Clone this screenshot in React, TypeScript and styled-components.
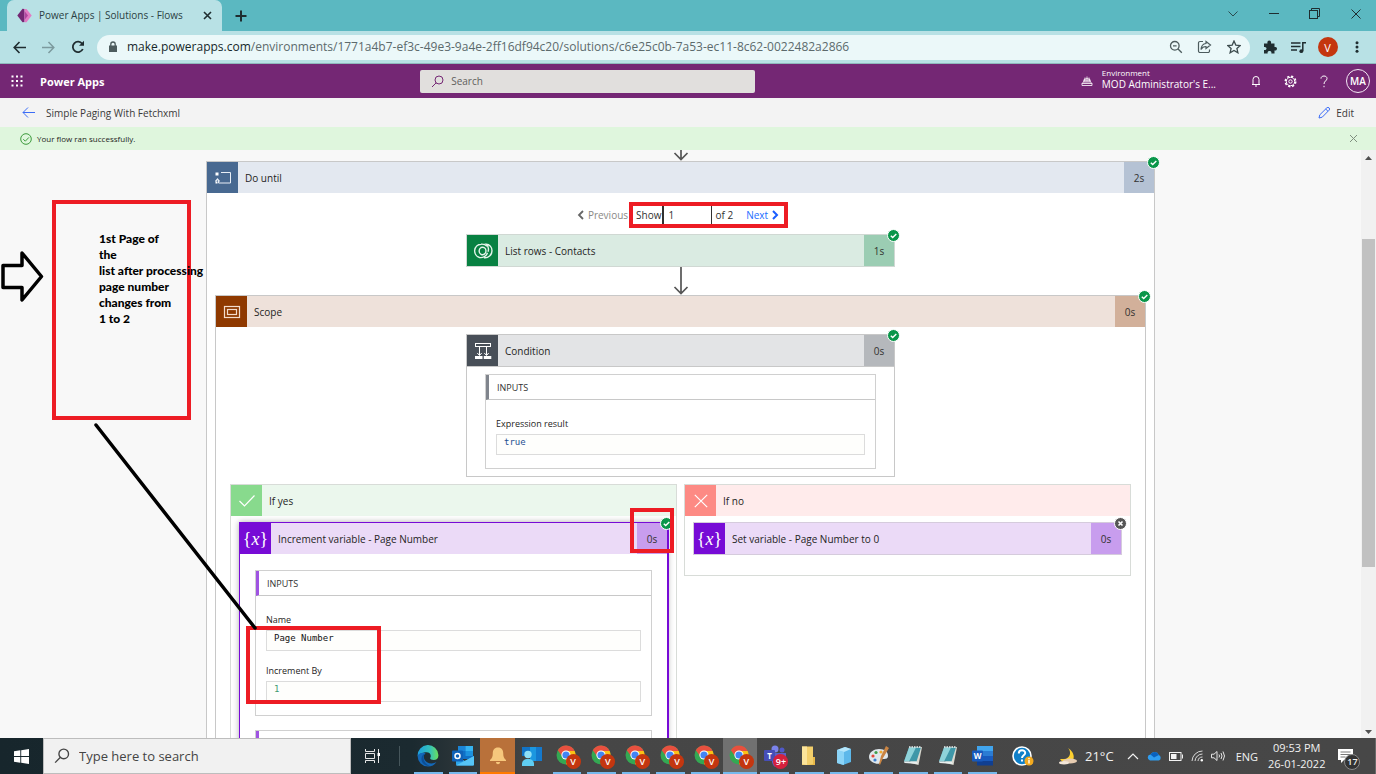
import React from 'react';
import styled, { createGlobalStyle, css } from 'styled-components';

const UI = '"Open Sans", "Noto Sans", "Liberation Sans", sans-serif';
const MONO = '"DejaVu Sans Mono", "Liberation Mono", monospace';

const GlobalStyle = createGlobalStyle`
  *, *::before, *::after { box-sizing: border-box; }
  body { margin: 0; font-family: ${UI}; color: #323130; }
  button, input { font: inherit; color: inherit; margin: 0; }
  svg { display: block; flex: none; }
`;

const Screen = styled.div`
  display: flex;
  flex-direction: column;
  height: 100vh;
  overflow: hidden;
`;

const PlainButton = styled.button`
  display: flex;
  align-items: center;
  justify-content: center;
  flex: none;
  padding: 0;
  border: 0;
  background: none;
`;

/* ---------- Browser window ---------- */

const TabStrip = styled.div`
  display: flex;
  align-items: stretch;
  height: 31px;
  padding-left: 7px;
  background: #5bb8c1;
`;

const Tab = styled.div`
  display: flex;
  align-items: center;
  width: 215px;
  padding: 0 10px 1px 10px;
  gap: 7px;
  border-radius: 7px 7px 0 0;
  background: #b8e1e5;
  color: #2b3f43;
  font-size: 10px;
  white-space: nowrap;
`;

const TabTitle = styled.span`
  flex: 1;
`;

const NewTab = styled(PlainButton)`
  width: 38px;
`;

const WindowControls = styled.div`
  display: flex;
  margin-left: auto;
  padding-bottom: 4px;
`;

const WindowButton = styled(PlainButton)`
  width: 41px;
`;

const Toolbar = styled.div`
  display: flex;
  align-items: center;
  height: 33px;
  padding: 0 5px;
  border-bottom: 1px solid #8fb9bd;
  background: #b8e1e5;
`;

const NavButton = styled(PlainButton)`
  width: 29px;
  height: 28px;
`;

const AddressBar = styled.div`
  display: flex;
  align-items: center;
  flex: 1;
  height: 25px;
  margin-left: 5px;
  padding: 0 9px 0 11px;
  gap: 9px;
  border-radius: 13px;
  background: #ebf8f9;
`;

const AddressText = styled.div`
  flex: 1;
  font-size: 12px;
  line-height: 20px;
  color: #5c6a6c;
  white-space: nowrap;
`;

const AddressHost = styled.span`
  color: #16282b;
`;

const AddressActions = styled.div`
  display: flex;
  gap: 14px;
  color: #4d5c5e;
`;

const ToolbarActions = styled.div`
  display: grid;
  grid-auto-flow: column;
  grid-auto-columns: 29px;
  align-items: center;
  justify-items: center;
  margin-left: 5px;
`;

const ProfileDot = styled(PlainButton)`
  width: 20px;
  height: 20px;
  border-radius: 50%;
  background: #c4360f;
  color: #fff;
  font-size: 11px;
`;

/* ---------- Power Apps chrome ---------- */

const AppHeader = styled.header`
  display: grid;
  grid-template-columns: 2fr 336px 3fr;
  align-items: center;
  flex: none;
  height: 34px;
  padding: 0 6px 0 11px;
  background: #742774;
  color: #fff;
`;

const Brand = styled.div`
  display: flex;
  align-items: center;
  gap: 17px;
  padding-right: 10px;
  font-size: 11px;
  font-weight: 700;
`;

const HeaderSearch = styled.label`
  display: flex;
  align-items: center;
  height: 23px;
  margin-right: 1px;
  padding-left: 11px;
  gap: 7px;
  border-radius: 2px;
  background: #e1dfdd;
  color: #605e5c;
  font-size: 10px;
`;

const BareInput = styled.input`
  flex: 1;
  min-width: 0;
  padding: 0;
  border: 0;
  outline: 0;
  background: transparent;
  &::placeholder { color: inherit; opacity: 1; }
`;

const HeaderTools = styled.div`
  display: flex;
  align-items: center;
  justify-content: flex-end;
`;

const Environment = styled(PlainButton)`
  gap: 9px;
  margin-right: 23px;
  text-align: left;
  font-size: 10px;
  line-height: 12px;
`;

const EnvironmentName = styled.span`
  padding-bottom: 5px;
`;

const EnvironmentCaption = styled.span`
  display: block;
  font-size: 8px;
  line-height: 11px;
`;

const HeaderButton = styled(PlainButton)`
  width: 34px;
  height: 34px;
  font-size: 15px;
`;

const Avatar = styled(PlainButton)`
  width: 24px;
  height: 24px;
  margin-left: 5px;
  border: 1px solid #f4e9f4;
  border-radius: 50%;
  font-size: 10px;
  font-weight: 600;
`;

const TitleBar = styled.div`
  display: flex;
  align-items: center;
  flex: none;
  height: 29px;
  padding: 0 22px;
  gap: 11px;
  background: #f3f3f3;
  color: #3b3a39;
`;

const FlowTitle = styled.h1`
  flex: 1;
  margin: 0;
  font-size: 10px;
  font-weight: 400;
`;

const EditButton = styled(PlainButton)`
  gap: 6px;
  font-size: 10px;
`;

const SuccessBar = styled.div`
  display: flex;
  align-items: center;
  flex: none;
  height: 23px;
  padding: 0 18px 0 20px;
  gap: 5px;
  background: #dff6dd;
  font-size: 8px;
  color: #252423;
`;

const SuccessText = styled.span`
  flex: 1;
`;

/* ---------- Designer canvas ---------- */

const Designer = styled.div`
  display: flex;
  flex: 1;
  min-height: 0;
`;

const Canvas = styled.main`
  display: flex;
  flex-direction: column;
  align-items: center;
  flex: 1;
  min-width: 0;
  overflow: hidden;
  background: #f8f8f8;
`;

const ScrollBar = styled.div`
  display: flex;
  flex-direction: column;
  align-items: center;
  justify-content: space-between;
  width: 15px;
  padding: 6px 1px 4px;
  background: #f1f1f1;
`;

const ScrollTrack = styled.div`
  display: flex;
  flex-direction: column;
  flex: 1;
  align-self: stretch;
  margin: 4px 0 5px;
`;

const ScrollGap = styled.div<{ $share: number }>`
  flex: ${p => p.$share};
`;

const ScrollThumb = styled.div<{ $share: number }>`
  flex: ${p => p.$share};
  background: #c1c1c1;
`;

const Container = styled.section<{ $line?: string }>`
  position: relative;
  display: flex;
  flex-direction: column;
  flex: none;
  border: 1px solid ${p => p.$line || '#c8c8c8'};
  background: #fff;
`;

const LoopBody = styled.div`
  display: flex;
  flex-direction: column;
  align-items: center;
  padding: 10px 8px 60px;
`;

const ScopeBody = styled.div`
  display: flex;
  flex-direction: column;
  align-items: center;
  padding: 7px 14px 60px;
`;

const BranchBody = styled.div`
  padding: 6px 8px 20px;
`;

const Branches = styled.div`
  display: flex;
  align-items: flex-start;
  gap: 7px;
  margin-top: 7px;
`;

const Card = styled(Container)<{ $selected?: boolean }>`
  width: 429px;
  ${p => p.$selected && css`
    border-color: #770bd6;
    box-shadow: 1px 0 0 #770bd6, 0 0 6px rgba(0, 0, 0, 0.32);
  `}
`;

const HeadBar = styled.header<{ $tint: string }>`
  display: flex;
  align-items: stretch;
  height: 31px;
  background: ${p => p.$tint};
  font-size: 10px;
`;

const HeadIcon = styled.span<{ $fill: string }>`
  display: flex;
  align-items: center;
  justify-content: center;
  width: 31px;
  background: ${p => p.$fill};
  color: #fff;
`;

const HeadTitle = styled.h2`
  display: flex;
  align-items: center;
  flex: 1;
  margin: 0;
  padding-left: 7px;
  font-size: 10px;
  font-weight: 400;
  color: #252423;
`;

const Duration = styled.span<{ $fill: string }>`
  display: flex;
  align-items: center;
  justify-content: center;
  width: 30px;
  background: ${p => p.$fill};
`;

const StatusBadge = styled.span`
  position: absolute;
  top: -6px;
  right: -6px;
`;

const Braces = styled.span`
  font-family: "Liberation Serif", "DejaVu Serif", serif;
  font-size: 18px;
  line-height: 20px;
`;

const Pager = styled.nav`
  position: relative;
  display: flex;
  align-items: center;
  height: 24px;
  margin-bottom: 7px;
  padding-right: 5px;
  font-size: 10px;
`;

const PagerButton = styled(PlainButton)<{ $tone: string }>`
  gap: 4px;
  color: ${p => p.$tone};
`;

const PagerLabel = styled.label`
  display: flex;
  align-items: center;
  gap: 1px;
  margin-left: 8px;
`;

const PagerInput = styled.input`
  width: 50px;
  height: 20px;
  padding: 0 4px;
  border: 1px solid #323130;
  border-left-width: 2px;
  background: #fff;
`;

const PagerCount = styled.span`
  margin: 0 13px 0 3px;
`;

const Panel = styled.div`
  border: 1px solid #d0d0d0;
  background: #fff;
`;

const PanelArea = styled.div`
  display: flex;
  flex-direction: column;
  padding: 7px 18px;
  border-top: 1px solid #c8c8c8;
`;

const SelectedArea = styled(PanelArea)`
  gap: 14px;
  padding: 16px 15px 14px;
  border-top: 0;
`;

const PanelHead = styled.h3<{ $bar: string }>`
  display: flex;
  align-items: center;
  height: 25px;
  margin: 0;
  padding-left: 8px;
  border-left: 3px solid ${p => p.$bar};
  border-bottom: 1px solid #c8c8c8;
  font-size: 9px;
  font-weight: 400;
`;

const PanelFields = styled.div`
  display: flex;
  flex-direction: column;
  gap: 9px;
  padding: 13px 10px;
`;

const Field = styled.label`
  display: flex;
  flex-direction: column;
  font-size: 9px;
  line-height: 21px;
  color: #252423;
`;

const FieldValue = styled.input<{ $ink: string }>`
  height: 21px;
  padding: 0 7px 5px;
  border: 1px solid #dcdcdc;
  background: #fefefc;
  font-family: ${MONO};
  font-size: 9px;
  color: ${p => p.$ink};
`;

/* ---------- Reviewer mark-up ---------- */

const RED = '#ed1c24';

const Frame = styled.div<{ $x: number; $y: number; $w: number; $h: number }>`
  position: absolute;
  z-index: 2;
  left: ${p => p.$x}px;
  top: ${p => p.$y}px;
  width: ${p => p.$w}px;
  height: ${p => p.$h}px;
  border: 4px solid ${RED};
  pointer-events: none;
`;

const Note = styled.p`
  position: absolute;
  z-index: 3;
  left: -108px;
  top: 69px;
  margin: 0;
  font-family: Lato, "Open Sans", sans-serif;
  font-size: 12px;
  font-weight: 900;
  line-height: 16px;
  color: #000;
  white-space: nowrap;
`;

const Drawing = styled.svg`
  position: absolute;
  z-index: 3;
  left: -207px;
  top: -12px;
  pointer-events: none;
`;

/* ---------- Taskbar ---------- */

const Taskbar = styled.footer`
  display: flex;
  align-items: stretch;
  flex: none;
  height: 36px;
  background: linear-gradient(90deg, #17262c 0, #1b2a30 30%, #464646 39%, #474747 100%);
  color: #f2f2f2;
`;

const StartButton = styled(PlainButton)`
  width: 43px;
`;

const TaskSearch = styled.label`
  display: flex;
  align-items: center;
  width: 308px;
  padding-left: 10px;
  gap: 9px;
  border: 1px solid #bdbdbd;
  background: #f1f1f1;
  color: #444;
  font-size: 13px;
`;

const TaskView = styled(PlainButton)`
  width: 43px;
`;

const Divider = styled.span`
  width: 1px;
  margin: 8px 11px 8px 5px;
  background: #46565b;
`;

const Apps = styled.div`
  display: flex;
  flex: 0 1 589px;
`;

const AppButton = styled(PlainButton)<{ $bg?: string; $line?: string }>`
  position: relative;
  flex: 1;
  background: ${p => p.$bg || 'none'};
  &::after {
    content: '';
    position: absolute;
    left: ${p => (p.$bg ? 0 : 3)}px;
    right: ${p => (p.$bg ? 0 : 3)}px;
    bottom: 0;
    height: 2px;
    background: ${p => p.$line || '#76b9ed'};
  }
`;

const AppBadge = styled.span<{ $bg: string }>`
  position: absolute;
  left: 16px;
  top: 16px;
  display: flex;
  align-items: center;
  justify-content: center;
  width: 15px;
  height: 15px;
  border-radius: 50%;
  background: ${p => p.$bg};
  color: #fff;
  font-size: 9px;
  font-weight: 600;
`;

const Tray = styled.div`
  display: flex;
  align-items: center;
  flex: 1;
  padding: 0 16px 0 12px;
  font-size: 11px;
  white-space: nowrap;
  border-right: 1px solid #6a6a6a;
`;

const TrayItem = styled(PlainButton)<{ $gap?: number }>`
  gap: 7px;
  margin-left: ${p => p.$gap ?? 7}px;
`;

const Weather = styled(TrayItem)`
  font-size: 13px;
`;

const Clock = styled(TrayItem)`
  flex-direction: column;
  gap: 0;
  line-height: 16px;
`;

const Notices = styled(TrayItem)`
  position: relative;
`;

const NoticeCount = styled.span`
  position: absolute;
  left: 6px;
  top: 5px;
  width: 16px;
  height: 16px;
  border: 1px solid #8a8a8a;
  border-radius: 50%;
  background: #333;
  font-size: 9px;
  line-height: 14px;
  font-weight: 600;
`;

/* ---------- Icons ---------- */

type IconProps = {
  w: number;
  h?: number;
  box?: string;
  stroke?: string;
  width?: number;
  children: React.ReactNode;
};

const Icon = ({ w, h = w, box, stroke = 'currentColor', width = 1, children }: IconProps) => (
  <svg width={w} height={h} viewBox={box || `0 0 ${w} ${h}`} fill="none" stroke={stroke} strokeWidth={width} aria-hidden="true">
    {children}
  </svg>
);

const Magnifier = ({ size = 14, flip = false, width = 1 }: { size?: number; flip?: boolean; width?: number }) => (
  <Icon w={size} box="0 0 14 14" width={width}>
    {flip ? (
      <><circle cx="8.5" cy="5.2" r="4.2" /><path d="M5.4 8.3 1 12.8" /></>
    ) : (
      <><circle cx="5.8" cy="5.8" r="4.3" /><path d="M8.8 8.8 12.8 12.8M4 5.8h3.6" /></>
    )}
  </Icon>
);

const Badge = ({ ok = true }: { ok?: boolean }) => (
  <StatusBadge>
    <Icon w={13} stroke="#fff">
      <circle cx="6.5" cy="6.5" r="6" fill={ok ? '#0a964a' : '#555'} />
      {ok ? <path d="M3.8 6.7 5.7 8.5 9.3 4.9" strokeWidth="1.4" /> : <path d="m4.5 4.5 4 4m0-4-4 4" strokeWidth="1.6" />}
    </Icon>
  </StatusBadge>
);

const FlowArrow = ({ length }: { length: number }) => (
  <Icon w={16} h={length} stroke="#555" width={1.7}>
    <path d={`M8 0V${length - 1}M1.5 ${length - 8} 8 ${length - 1.5} 14.5 ${length - 8}`} />
  </Icon>
);

const ChromeLogo = () => (
  <Icon w={22} stroke="none">
    <circle cx="10" cy="10" r="9.5" fill="#34a853" />
    <path d="M10 10V6h8.7A9.5 9.5 0 0 1 10 19.5z" fill="#fbc116" />
    <path d="M1.8 5.2A9.5 9.5 0 0 1 18.7 6H10L7 12.5z" fill="#e8503f" />
    <circle cx="10" cy="10" r="4.6" fill="#fff" />
    <circle cx="10" cy="10" r="3.6" fill="#4285f4" />
  </Icon>
);

const EdgeLogo = () => (
  <Icon w={22} stroke="none">
    <defs>
      <linearGradient id="edgeTop" x1="0" x2="1"><stop offset="0" stopColor="#1c9fe0" /><stop offset=".6" stopColor="#35c1b8" /><stop offset="1" stopColor="#6be05a" /></linearGradient>
    </defs>
    <path d="M.6 11A10.4 10.4 0 0 1 21.4 10c.2 3.2-2 5-4.7 5-2.5 0-4-1-3.4-2.2 1.4-2.6-.3-5.6-3.8-5.6C5 7.2 1.8 9.5.6 11z" fill="url(#edgeTop)" />
    <path d="M.6 11C1.8 8.6 5 7.2 8.6 8.2 5.9 10 6.2 15 10 17.2c3.2 1.8 7 1.4 9.4-.2C17.6 20 14.5 21.5 11 21.5A10.4 10.4 0 0 1 .6 11z" fill="#1468b8" />
    <path d="M8.6 8.2C5.4 10 5.3 17.8 12.5 20.8c-5 .8-8.5-3.5-8-7.6.3-2.5 2-4.3 4.1-5z" fill="#0c4f96" />
  </Icon>
);

const OutlookLogo = () => (
  <Icon w={22} stroke="none">
    <path d="M6 1h15v13H6z" fill="#0f6fc6" />
    <path d="M6 1h7.5v5H6z" fill="#1b84d6" /><path d="M13.5 1H21v5h-7.5z" fill="#35b3f1" /><path d="M13.5 6H21v5h-7.5z" fill="#1d92de" />
    <path d="M4 11l9 5 9-5v8.5a1 1 0 0 1-1 1H5a1 1 0 0 1-1-1z" fill="#2ea6ea" />
    <path d="M4 20.5 22 11v8.5a1 1 0 0 1-1 1z" fill="#56c5f7" />
    <rect x="0" y="5.5" width="11" height="11" rx="1" fill="#0f62b8" />
    <circle cx="5.5" cy="11" r="2.5" stroke="#fff" strokeWidth="1.5" />
  </Icon>
);

const WordLogo = () => (
  <Icon w={22} stroke="none">
    <path d="M5 1h16v5H5z" fill="#41a5ee" /><path d="M5 6h16v5H5z" fill="#2b7cd3" />
    <path d="M5 11h16v5H5z" fill="#185abd" /><path d="M5 16h16v4.5H5z" fill="#103f91" />
    <rect x="0" y="5.5" width="11" height="11" rx="1" fill="#185abd" />
    <text x="5.5" y="14" fontSize="8" fontWeight="700" fill="#fff" textAnchor="middle">W</text>
  </Icon>
);

const Notepad = () => (
  <Icon w={22} stroke="none">
    <path d="M8 2.5 20 2l-3.5 18-8-2z" fill="#d9d8cf" />
    <path d="M7 2.5h12L14.5 16.5H2z" fill="#3f97a8" />
    <path d="M7 2.5h7L7 16.5H2z" fill="#8fd3da" />
    <path d="M2 16.5h12.5l1.5 2.5L2.5 18z" fill="#e9eeee" />
    <path d="M7 2h12" stroke="#e9eeee" strokeWidth="1.5" strokeDasharray="1.5 1" />
  </Icon>
);

const apps: { name: string; art: React.ReactNode; bg?: string; line?: string; badge?: [string, string] }[] = [
  { name: 'Edge', art: <EdgeLogo /> },
  { name: 'Outlook', art: <OutlookLogo /> },
  {
    name: 'Alerts', bg: '#b9713a', line: '#ff7a00',
    art: <Icon w={20} stroke="none"><path d="M10 1.5c3.7 0 5.2 2.5 5.2 5.5 0 3.8.8 5.2 2.8 7v1H2v-1c2-1.8 2.8-3.2 2.8-7 0-3 1.5-5.5 5.2-5.5zM8 16h4c0 3-4 3-4 0z" fill="#f6c77c" /></Icon>,
  },
  {
    name: 'People', line: 'transparent',
    art: <Icon w={22} stroke="none"><path d="M1 2h8v9H1z" fill="#1173c5" /><path d="M9 2h12v14H9z" fill="#1c97e0" /><path d="M15 2h6v14h-6z" fill="#1479cd" /><circle cx="7" cy="9.5" r="3.7" fill="#8fe0f7" /><path d="M1 21v-2c0-3 2-5 6-5s6 2 6 5v2z" fill="#5fcdf2" /></Icon>,
  },
  ...Array.from({ length: 6 }, (_, i) => ({
    name: `Chrome window ${i + 1}`, art: <ChromeLogo />, badge: ['V', '#c4360f'] as [string, string],
    bg: i === 5 ? '#717171' : undefined,
  })),
  {
    name: 'Teams', badge: ['9+', '#d4213d'],
    art: <Icon w={22} stroke="none"><circle cx="11" cy="4" r="3.5" fill="#7b83eb" /><circle cx="18" cy="5" r="2.5" fill="#5059c9" /><path d="M8 8h14v7a6 6 0 0 1-14 2z" fill="#5a62c9" /><rect x="0" y="5" width="11" height="11" rx="1" fill="#464eb8" /><text x="5.5" y="13.5" fontSize="8" fontWeight="700" fill="#fff" textAnchor="middle">T</text></Icon>,
  },
  {
    name: 'File Explorer',
    art: <Icon w={22} stroke="none"><path d="M4 1.5h11v18.5H4z" fill="#f3cf6b" /><path d="M4 1.5h5v18.5l-5-1z" fill="#fbe49b" /><path d="M15 12h2v8h-7l5-1z" fill="#e8b94a" /></Icon>,
  },
  {
    name: 'Storage',
    art: <Icon w={22} stroke="none"><path d="M4 5 12 2l6 2v13l-8 3-6-2z" fill="#5db8ea" /><path d="M4 5l7 2v13l-7-2z" fill="#8bd4f7" /><path d="m4 5 8-3 6 2-7 3z" fill="#b5e6fb" /></Icon>,
  },
  {
    name: 'Paint',
    art: <Icon w={22} stroke="none"><path d="M11 4c6 0 9 3 9 7 0 3-3 3-5 3s-2 2-3 4-11 0-11-6c0-5 5-8 10-8z" fill="#dfe7ec" /><circle cx="5" cy="11" r="1.6" fill="#e2483d" /><circle cx="8" cy="7.5" r="1.6" fill="#3f9e4b" /><circle cx="13" cy="7" r="1.6" fill="#f0a830" /><circle cx="7" cy="15" r="1.6" fill="#3b7fd0" /><path d="m18 1 3 2-6 10-3 7-1-1 2-8z" fill="#c98443" /></Icon>,
  },
  { name: 'Notepad', art: <Notepad /> },
  { name: 'Notepad notes', art: <Notepad /> },
  { name: 'Word', art: <WordLogo /> },
];

/* ---------- Flow step parts ---------- */

type HeadProps = { title: string; tint: string; fill: string; icon: React.ReactNode; time?: string; timeFill?: string; ok?: boolean };

const Head = ({ title, tint, fill, icon, time, timeFill = '', ok }: HeadProps) => (
  <>
    <HeadBar $tint={tint}>
      <HeadIcon $fill={fill}>{icon}</HeadIcon>
      <HeadTitle>{title}</HeadTitle>
      {time && <Duration $fill={timeFill}>{time}</Duration>}
    </HeadBar>
    {time && <Badge ok={ok} />}
  </>
);

const Variable = () => <Braces>{'{'}<i>x</i>{'}'}</Braces>;

const Step = {
  loop: (
    <Icon w={18} h={14} stroke="#e8eef6">
      <path d="M7 1.5h9.500v10.500H4.500V9" /><path d="M1.500 10.500 3.500 8l2 2.500" strokeWidth="1.300" /><rect x="1.500" y="1.500" width="3" height="3" fill="#fff" stroke="none" /><rect x="1.500" y="10.500" width="2" height="2" fill="#fff" stroke="none" />
    </Icon>
  ),
  scope: (
    <Icon w={18} h={14} stroke="#f3dccd" width={1.2}><rect x="1.5" y="1.5" width="15" height="11" /><rect x="4.5" y="4.5" width="9" height="5" /></Icon>
  ),
  dataverse: (
    <Icon w={20} h={16} stroke="#e4f4ea" width={1.4}>
      <path d="M14 3.3C12.300 1.500 10 1 8 1.200A6.800 6.800 0 0 0 6.500 14.500c3.500.6 7-1.500 8-4.700" />
      <path d="M11 14.700A7 7 0 0 0 19 7.800C19 4 16.500 1.300 13.200 1.300c2 1.700 2.800 4.500 1.800 7.500" />
      <path d="M8 4.500C5.500 6 5.500 10 8 11.300c2.300 1.200 5-.5 5-3.300 0-2.900-2.500-4.500-5-3.500z" />
    </Icon>
  ),
  condition: (
    <Icon w={18} h={18} stroke="#fff">
      <rect x="1.5" y="1.5" width="15" height="3" /><path d="M5.5 5v8M12.5 5v8M3.3 11l2.2 2.5L7.7 11M10.3 11l2.2 2.5 2.2-2.5" />
      <path d="M1 14h7.5v3H1zM9.8 14h7.5v3H9.8z" fill="#fff" stroke="none" />
    </Icon>
  ),
  yes: <Icon w={18} h={14} stroke="#fff" width={1.2}><path d="m1.5 7 5 5L16.5 1.5" /></Icon>,
  no: <Icon w={14} stroke="#fff" width={1.2}><path d="m.8.8 12.4 12.4M13.2.8.8 13.2" /></Icon>,
};

const BrowserChrome = () => (
  <>
    <TabStrip>
      <Tab>
        <Icon w={15} stroke="none">
          <path d="M5.5.8 7.5 1v13l-2 .2L.3 7.5z" fill="#742774" /><path d="M7.5 1h2L14.7 7.5 9.5 14.2h-2z" fill="#e27bc4" /><path d="m7.5 3 3.5 4.5L7.5 12z" fill="#b0479f" />
        </Icon>
        <TabTitle>Power Apps | Solutions - Flows</TabTitle>
        <PlainButton aria-label="Close tab"><Icon w={9} stroke="#1f2d30" width={1.6}><path d="m1 1 7 7m0-7-7 7" /></Icon></PlainButton>
      </Tab>
      <NewTab aria-label="New tab"><Icon w={12} stroke="#1f2d30" width={2}><path d="M6 .5v11M.5 6h11" /></Icon></NewTab>
      <WindowControls>
        <WindowButton aria-label="Search tabs"><Icon w={10} h={6} stroke="#2b4a4e"><path d="m.5.5 4.5 4.5L9.5.5" /></Icon></WindowButton>
        <WindowButton aria-label="Minimize"><Icon w={10} h={2} stroke="#1f2d30"><path d="M0 .5h10" /></Icon></WindowButton>
        <WindowButton aria-label="Restore"><Icon w={11} stroke="#1f2d30"><rect x=".5" y="2.5" width="8" height="8" /><path d="M2.5 2V.5h8v8H9" /></Icon></WindowButton>
        <WindowButton aria-label="Close window"><Icon w={10} stroke="#1f2d30"><path d="m.5.5 9 9m0-9-9 9" /></Icon></WindowButton>
      </WindowControls>
    </TabStrip>
    <Toolbar>
      <NavButton aria-label="Back"><Icon w={13} stroke="#1f2d30" width={1.6}><path d="M13 6.5H1.5M6.5 1 1.2 6.5l5.3 5.5" /></Icon></NavButton>
      <NavButton aria-label="Forward"><Icon w={13} stroke="#7c9a9e" width={1.5}><path d="M0 6.5h11.5M6.5 1l5.3 5.5-5.3 5.5" /></Icon></NavButton>
      <NavButton aria-label="Reload"><Icon w={14} stroke="#1f2d30" width={1.8}><path d="M11.8 9a5.2 5.2 0 1 1-.6-5.2" /><path d="M13 .8v5H8z" fill="#1f2d30" stroke="none" /></Icon></NavButton>
      <AddressBar>
        <Icon w={10} h={12} stroke="none"><path d="M1 4.5h8V11H1z" fill="#4d5c5e" /><path d="M2.8 5V3.2a2.2 2.2 0 0 1 4.4 0V5" stroke="#4d5c5e" strokeWidth="1.3" /></Icon>
        <AddressText role="textbox" aria-label="Address">
          <AddressHost>make.powerapps.com</AddressHost>/environments/1771a4b7-ef3c-49e3-9a4e-2ff16df94c20/solutions/c6e25c0b-7a53-ec11-8c62-0022482a2866
        </AddressText>
        <AddressActions>
          <PlainButton aria-label="Zoom"><Magnifier size={14} width={1.3} /></PlainButton>
          <PlainButton aria-label="Share"><Icon w={16} h={14} width={1.2}><path d="M6 1.5H3a1.5 1.5 0 0 0-1.5 1.5v8A1.5 1.5 0 0 0 3 12.5h8a1.5 1.5 0 0 0 1.5-1.5V9.5" /><path d="M9 1.5 13.5 5 9 8.5V6.5C6.5 6.5 5 7.5 4 9.5c.2-3 2-5.7 5-6z" /></Icon></PlainButton>
          <PlainButton aria-label="Bookmark"><Icon w={14} stroke="#3d4c4e" width={1.3}><path d="m7 1 1.8 4.1 4.4.4-3.3 2.9 1 4.4L7 10.5l-3.9 2.3 1-4.4L.8 5.5l4.4-.4z" /></Icon></PlainButton>
        </AddressActions>
      </AddressBar>
      <ToolbarActions>
        <PlainButton aria-label="Extensions"><Icon w={14} stroke="none"><path d="M1 3.5h3.5C4 1.5 5 .5 6.2.5S8.5 1.5 8 3.5h3.5V7c2-.5 2.5.8 2.5 1.7S13 11 11.5 10.4V13.5H8.3C8.8 11.8 7.8 11 6.5 11S4.2 11.8 4.7 13.5H1V10c1.7.4 2.5-.5 2.5-1.5S2.7 6.6 1 7z" fill="#1f2d30" /></Icon></PlainButton>
        <PlainButton aria-label="Media"><Icon w={15} h={13} stroke="#1f2d30" width={1.5}><path d="M0 2h9.5M0 5.5h9.5M0 9h6M11.8 10V1.8H15" /><circle cx="10.3" cy="10.2" r="1.9" fill="#1f2d30" stroke="none" /></Icon></PlainButton>
        <ProfileDot aria-label="Profile">V</ProfileDot>
        <PlainButton aria-label="Menu"><Icon w={14} h={12} stroke="none"><g fill="#1f2d30"><circle cx="7" cy="1.7" r="1.5" /><circle cx="7" cy="6" r="1.5" /><circle cx="7" cy="10.3" r="1.5" /></g></Icon></PlainButton>
      </ToolbarActions>
    </Toolbar>
  </>
);

const PortalHeader = () => (
  <>
    <AppHeader>
      <Brand>
        <PlainButton aria-label="App launcher">
          <Icon w={12} stroke="none">
            {[0, 1, 2].map(r => [0, 1, 2].map(c => <rect key={`${r}${c}`} x={c * 4.5 + 0.5} y={r * 4.5 + 0.5} width="2" height="2" fill="#fff" />))}
          </Icon>
        </PlainButton>
        Power Apps
      </Brand>
      <HeaderSearch>
        <Icon w={13} stroke="#742774"><circle cx="8" cy="5" r="4" /><path d="M5.2 7.8 1 12" /></Icon>
        <BareInput placeholder="Search" aria-label="Search" />
      </HeaderSearch>
      <HeaderTools>
        <Environment>
          <Icon w={12} h={12} stroke="#fff"><path d="M2.5 7a3.5 3.5 0 1 1 7 0M2.5 5.2h7M6 1.5V7M4 2.5Q3.5 5 4 7M8 2.5Q8.5 5 8 7M1 10.5V8.5L2.5 7h7L11 8.5v2zM1 8.5h10" strokeWidth=".8" /></Icon>
          <EnvironmentName>
            <EnvironmentCaption>Environment</EnvironmentCaption>
            MOD Administrator's E...
          </EnvironmentName>
        </Environment>
        <HeaderButton aria-label="Notifications"><Icon w={10} h={12} stroke="#fff"><path d="M1 9.5h8M2 9.5v-5a3 3 0 0 1 6 0v5M4 11h2" /></Icon></HeaderButton>
        <HeaderButton aria-label="Settings"><Icon w={13} stroke="#fff"><circle cx="6.5" cy="6.5" r="5.2" strokeWidth="1.6" strokeDasharray="2.2 1.884" /><circle cx="6.5" cy="6.5" r="4.2" /><circle cx="6.5" cy="6.5" r="1.7" /></Icon></HeaderButton>
        <HeaderButton aria-label="Help"><Icon w={8} h={13} stroke="#fff"><path d="M1 3.6C1 2 2.2 1 4 1s3 1 3 2.5C7 5.8 4 6 4 9M4 10.8V12.2" /></Icon></HeaderButton>
        <Avatar>MA</Avatar>
      </HeaderTools>
    </AppHeader>
    <TitleBar>
      <PlainButton aria-label="Go back"><Icon w={13} h={11} stroke="#3b6cf6"><path d="M13 5.5H1M6 .5 1 5.5l5 5" /></Icon></PlainButton>
      <FlowTitle>Simple Paging With Fetchxml</FlowTitle>
      <EditButton>
        <Icon w={12} stroke="#3b6cf6"><path d="M1 11l.8-3.2L8.8.9a1.3 1.3 0 0 1 2.3 2.3L4.2 10.2zM7.7 2l2.3 2.3" /></Icon>
        Edit
      </EditButton>
    </TitleBar>
    <SuccessBar role="status">
      <Icon w={12} stroke="#3c9a3c"><circle cx="6" cy="6" r="5.3" /><path d="m3.3 6.2 2 2 3.6-3.8" /></Icon>
      <SuccessText>Your flow ran successfully.</SuccessText>
      <PlainButton aria-label="Dismiss"><Icon w={9} stroke="#7f8f7e"><path d="m1 1 7 7m0-7-7 7" /></Icon></PlainButton>
    </SuccessBar>
  </>
);

const Markup = () => (
  <>
    <Frame $x={-155} $y={38} $w={139} $h={220} />
    <Frame $x={39} $y={464} $w={135} $h={78} />
    <Note>1st Page of<br />the<br />list after processing<br />page number<br />changes from<br />1 to 2</Note>
    <Drawing width="300" height="500" fill="none" stroke="#000" aria-hidden="true">
      <path d="M3 115.5H22V103L41.5 126.5 22 150V137.5H3z" strokeWidth="3.5" strokeLinejoin="round" fill="#f8f8f8" />
      <path d="M96 275 255 478" strokeWidth="3.5" strokeLinecap="round" />
    </Drawing>
  </>
);

const Flow = () => (
  <Designer>
    <Canvas>
      <FlowArrow length={11} />
      <Container>
        <Head title="Do until" tint="#e3e8f0" fill="#486991" icon={Step.loop} time="2s" timeFill="#b5c2d4" />
        <LoopBody>
          <Pager aria-label="Iterations">
            <PagerButton $tone="#8a8886">
              <Icon w={7} h={10} stroke="#666" width={1.8}><path d="M6 1 2 5l4 4" /></Icon>Previous
            </PagerButton>
            <PagerLabel>Show <PagerInput defaultValue="1" /></PagerLabel>
            <PagerCount>of 2</PagerCount>
            <PagerButton $tone="#1a6dff">
              Next<Icon w={7} h={10} stroke="#1a5dff" width={2}><path d="m1 1 4 4-4 4" /></Icon>
            </PagerButton>
            <Frame $x={52} $y={-1} $w={159} $h={26} />
          </Pager>
          <Card $line="#d0d8d3">
            <Head title="List rows - Contacts" tint="#daebe2" fill="#088142" icon={Step.dataverse} time="1s" timeFill="#9bcdb3" />
          </Card>
          <FlowArrow length={28} />
          <Container>
            <Head title="Scope" tint="#eee1da" fill="#8f3900" icon={Step.scope} time="0s" timeFill="#d2b09a" />
            <ScopeBody>
              <Card>
                <Head title="Condition" tint="#e3e4e6" fill="#484f58" icon={Step.condition} time="0s" timeFill="#b5b8bc" />
                <PanelArea>
                  <Panel>
                    <PanelHead $bar="#80858d">INPUTS</PanelHead>
                    <PanelFields>
                      <Field>Expression result<FieldValue $ink="#1d4f91" defaultValue="true" readOnly /></Field>
                    </PanelFields>
                  </Panel>
                </PanelArea>
              </Card>
              <Branches>
                <Container $line="#d8dcd8">
                  <Head title="If yes" tint="#ebf7ed" fill="#88da8d" icon={Step.yes} />
                  <BranchBody>
                    <Card $selected>
                      <Head title="Increment variable - Page Number" tint="#ebdaf7" fill="#770bd6" icon={<Variable />} time="0s" timeFill="#c89dee" />
                      <SelectedArea>
                        <Panel>
                          <PanelHead $bar="#9f54e2">INPUTS</PanelHead>
                          <PanelFields>
                            <Field>Name<FieldValue $ink="#111" defaultValue="Page Number" readOnly /></Field>
                            <Field>Increment By<FieldValue $ink="#3f9b72" defaultValue="1" readOnly /></Field>
                          </PanelFields>
                        </Panel>
                        <Panel>
                          <PanelHead $bar="#9f54e2" />
                        </Panel>
                      </SelectedArea>
                      <Frame $x={390} $y={-15} $w={44} $h={45} />
                    </Card>
                  </BranchBody>
                </Container>
                <Container $line="#d8dcd8">
                  <Head title="If no" tint="#ffebeb" fill="#fd8a84" icon={Step.no} />
                  <BranchBody>
                    <Card $line="#d5cbdc">
                      <Head title="Set variable - Page Number to 0" tint="#ebdaf7" fill="#770bd6" icon={<Variable />} time="0s" timeFill="#c89dee" ok={false} />
                    </Card>
                  </BranchBody>
                </Container>
              </Branches>
            </ScopeBody>
          </Container>
        </LoopBody>
        <Markup />
      </Container>
    </Canvas>
    <ScrollBar aria-hidden="true">
      <Icon w={7} h={4} stroke="none"><path d="M0 4 3.5 0 7 4z" fill="#505050" /></Icon>
      <ScrollTrack><ScrollGap $share={75} /><ScrollThumb $share={328} /><ScrollGap $share={158} /></ScrollTrack>
      <Icon w={7} h={4} stroke="none"><path d="M0 0 3.5 4 7 0z" fill="#505050" /></Icon>
    </ScrollBar>
  </Designer>
);

const WindowsTaskbar = () => (
  <Taskbar>
    <StartButton aria-label="Start"><Icon w={15} stroke="none"><path d="M0 2.2 6.3 1.3V7H0zM7.2 1.2 15 0v7H7.2zM0 8h6.3v5.7L0 12.8zM7.2 8H15v7l-7.8-1.2z" fill="#fff" /></Icon></StartButton>
    <TaskSearch>
      <Magnifier size={16} flip width={1.2} />
      <BareInput placeholder="Type here to search" aria-label="Type here to search" />
    </TaskSearch>
    <TaskView aria-label="Task view"><Icon w={15} h={14} stroke="#e6e6e6"><path d="M.5 0v2.5h9V0M.5 14v-2.5h9V14M.5 4.5h9v5h-9zM13.5 0v14" /><rect x="12.5" y="4" width="2.5" height="3" fill="#fff" stroke="none" /></Icon></TaskView>
    <Divider />
    <Apps>
      {apps.map(a => (
        <AppButton key={a.name} aria-label={a.name} $bg={a.bg} $line={a.line}>
          {a.art}
          {a.badge && <AppBadge $bg={a.badge[1]}>{a.badge[0]}</AppBadge>}
        </AppButton>
      ))}
    </Apps>
    <Tray>
      <TrayItem $gap={0} aria-label="Get help"><Icon w={22} stroke="none"><circle cx="10" cy="11" r="9" fill="#0f7fc8" stroke="#fff" strokeWidth="1.6" /><path d="M6.8 8.5c0-4.5 6.5-4 6.4-.5 0 2.3-3.2 2.3-3.2 5M10 14.5v2" stroke="#fff" strokeWidth="2" /><circle cx="17" cy="16" r="4.5" fill="#f2a91f" /><path d="M17 13v1.3M17 15v3.5" stroke="#fff" strokeWidth="1.4" /></Icon></TrayItem>
      <Weather $gap={24}>
        <Icon w={20} h={18} stroke="none"><path d="M10 1c4 4 2 11-4 11H2c2 3 5 4.5 9 4 6-1 7-10-1-15z" fill="#fdd02f" /><ellipse cx="12" cy="14" rx="7" ry="2.5" fill="#e7cdb2" /><ellipse cx="6" cy="15.8" rx="5" ry="1.7" fill="#f4e6d8" /></Icon>
        21°C
      </Weather>
      <TrayItem $gap={13} aria-label="Show hidden icons"><Icon w={12} h={7} stroke="#f2f2f2" width={1.2}><path d="m1 6 5-5 5 5" /></Icon></TrayItem>
      <TrayItem $gap={8} aria-label="OneDrive"><Icon w={15} h={10} stroke="none"><path d="M3 9.5A3 3 0 0 1 3.5 3.6 4.5 4.5 0 0 1 11.8 4 3 3 0 0 1 12 9.5z" fill="#2f9df0" /><path d="M3.5 3.6A4.5 4.5 0 0 1 11.8 4L7 6.5z" fill="#0a61bd" /></Icon></TrayItem>
      <TrayItem $gap={7} aria-label="Battery"><Icon w={14} h={9} stroke="#f2f2f2"><rect x=".5" y=".5" width="11.5" height="8" /><path d="M13.5 2.5v4" /><rect x="2" y="2" width="5.5" height="5" fill="#f2f2f2" stroke="none" /></Icon></TrayItem>
      <TrayItem $gap={8} aria-label="Network"><Icon w={13} h={12} stroke="#d9d9d9"><path d="M1 11A10.5 10.5 0 0 1 11.5 1M4 11a7.5 7.5 0 0 1 7.5-7M7 11a4.5 4.5 0 0 1 4.5-4" /><circle cx="10.8" cy="10.3" r="1.2" fill="#fff" stroke="none" /></Icon></TrayItem>
      <TrayItem $gap={7} aria-label="Volume"><Icon w={15} h={12} stroke="#e6e6e6"><path d="M.5 4.2H3L6 1.5v9L3 7.8H.5zM8 4.5q1 1.5 0 3M10 3q2 3 0 6M12 1.5q3 4.5 0 9" /></Icon></TrayItem>
      <TrayItem $gap={10}>ENG</TrayItem>
      <Clock $gap={10}><span>09:53 PM</span><span>26-01-2022</span></Clock>
      <Notices $gap={13} aria-label="17 notifications">
        <Icon w={15} stroke="none"><path d="M0 0h15v11H6l-3 3v-3H0z" fill="#fff" /><path d="M2.5 3h10M2.5 5.5h10M2.5 8h5" stroke="#777" /></Icon>
        <NoticeCount>17</NoticeCount>
      </Notices>
    </Tray>
  </Taskbar>
);

export default function App() {
  return (
    <Screen>
      <GlobalStyle />
      <BrowserChrome />
      <PortalHeader />
      <Flow />
      <WindowsTaskbar />
    </Screen>
  );
}
